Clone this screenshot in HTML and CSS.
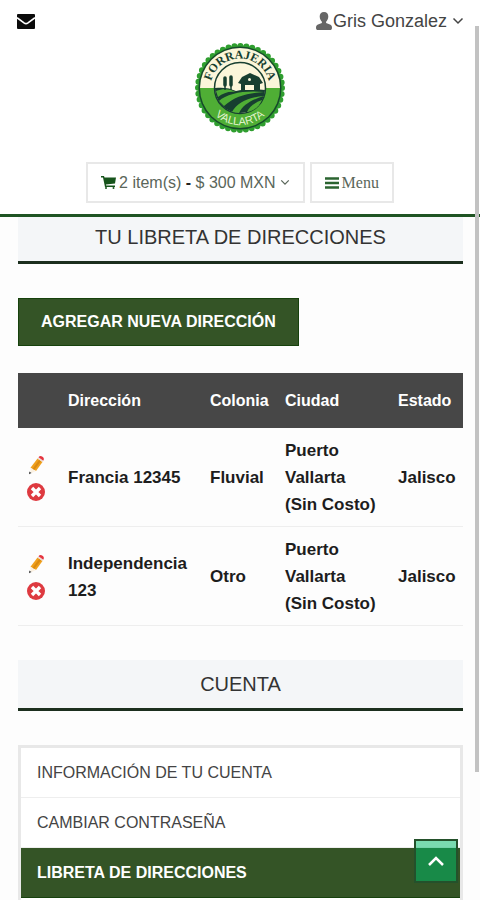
FILE: index.html
```html
<!DOCTYPE html>
<html lang="es">

<head>
    <meta charset="UTF-8">
    <meta name="viewport" content="width=device-width, initial-scale=1.0">
    <title>Forrajeria Vallarta</title>
    <link rel="stylesheet" href="styles.css">
</head>

<body>

    <!-- Shared icons -->
    <svg class="sprite" aria-hidden="true">
        <symbol id="chevron" viewBox="0 0 12 8">
            <path d="M1.5 1.5 6 6l4.500-4.500" fill="none" stroke="currentColor" stroke-width="1.500" />
        </symbol>
        <symbol id="pencil" viewBox="0 0 18 20">
            <path d="m10.500 3.500 5 3.500-6.500 9-5.500-3.200z" fill="#f0a01c" />
            <path d="m12 5 2 1.300-7 9-1.700-1.100z" fill="#d98a12" />
            <path d="m10.500 3.500.8-1 5 3.400-.8 1.100z" fill="#e8dcd8" />
            <path d="M11.500 2.200C12.500.8 14 .8 15.500 1.800c1.400 1 1.800 2.400.8 3.900z" fill="#e5353f" />
            <path d="M3.500 12.800 9 16l-5.500 2.500z" fill="#fbf1e2" />
            <path d="m2.300 16.500 2.200 1.400-2.500 1.300z" fill="#444" />
        </symbol>
        <symbol id="remove" viewBox="0 0 18 18">
            <circle cx="9" cy="9" r="9" fill="#de3a40" />
            <path d="m5 5 8 8m0-8-8 8" stroke="#fff" stroke-width="3.400" />
        </symbol>
    </svg>

    <header class="header">
        <div class="topbar">
            <a href="#" class="mail" aria-label="Contacto">
                <svg width="18" height="15" viewBox="0 0 18 15">
                    <rect width="18" height="15" rx="1" fill="#0b0b0b" />
                    <path d="m0 3.700 7 5.200q2 1.400 4 0l7-5.200" fill="none" stroke="#fff" stroke-width="1.700" />
                </svg>
            </a>
            <button type="button" class="user">
                <svg width="16" height="18" viewBox="0 0 16 18">
                    <path d="M8 0C5.200 0 3.600 1.800 3.700 4.600c.1 2.400 1 4.100 2.200 5.100v1.400L2 12.600C.6 13.200 0 14.200 0 15.700 0 17.300.7 18 2 18h12c1.300 0 2-.7 2-2.300 0-1.500-.6-2.500-2-3.100l-3.900-1.500V9.700c1.200-1 2.100-2.700 2.200-5.100C12.400 1.800 10.800 0 8 0z" fill="#666" />
                </svg>
                <span>Gris Gonzalez</span>
                <svg class="chevron" width="12" height="8"><use href="#chevron" /></svg>
            </button>
        </div>

        <a href="#" class="logo" aria-label="Forrajeria Vallarta">
            <svg width="92" height="92" viewBox="0 0 92 92">
                <circle cx="46" cy="46" r="42" fill="#2f9e2f" stroke="#2f9e2f" stroke-width="6" stroke-linecap="round" stroke-dasharray="0 6" />
                <circle cx="46" cy="46" r="41.500" fill="#174a2b" />
                <path d="M6 46a40 40 0 0 1 80 0z" fill="#fbf6da" />
                <path d="M6 46a40 40 0 0 0 80 0z" fill="#4fae35" />
                <circle cx="46" cy="46" r="25.500" fill="#fbf6da" stroke="#173f30" stroke-width="1.500" />
                <path d="M21 46c8-1 15 0 21 3 8-2 17-2 29-1-1 13-11 23-25 23S21 60 21 46z" fill="#173f30" />
                <path d="M22 49c7-3 15-2 20 1-7-1-13 1-18 5z" fill="#4fae35" />
                <path d="M25 59c8-8 27-11 45-9-16 1-29 4-40 14z" fill="#4fae35" />
                <path d="M38 70c5-9 16-15 32-16-13 4-21 9-25 17z" fill="#4fae35" />
                <path d="M53 70c2-5 7-9 15-12-2 5-6 9-11 11z" fill="#4fae35" />
                <path d="M31 35v13m6-14v14" stroke="#173f30" stroke-width="1.500" />
                <path d="M31 36v7m6-8v8" stroke="#173f30" stroke-width="3.500" stroke-linecap="round" />
                <path d="M44 41l4-6 8-4 9 4 4 6-3 1v7H47v-7z" fill="#173f30" />
                <path d="M51 43h9v5h-9z" fill="#fbf6da" />
                <circle cx="55.500" cy="37.500" r="1.500" fill="#fbf6da" />
                <path id="arcTop" d="M16.500 46a29.500 29.500 0 0 1 59 0" fill="none" />
                <path id="arcBottom" d="M9 46a37 37 0 0 0 74 0" fill="none" />
                <text class="logo-top"><textPath href="#arcTop" startOffset="50%">FORRAJERIA</textPath></text>
                <text class="logo-bottom"><textPath href="#arcBottom" startOffset="50%">VALLARTA</textPath></text>
            </svg>
        </a>

        <div class="actions">
            <button type="button" class="box">
                <svg width="15" height="13" viewBox="0 0 15 13">
                    <path d="M0 0h3l.5 1.500H15L14 7.500 5 8.500l.2 1H14V11H4L2 1.500H0z" fill="#17541c" />
                    <circle cx="5" cy="12" r="1" fill="#17541c" />
                    <circle cx="12.500" cy="12" r="1" fill="#17541c" />
                </svg>
                <span>2 item(s) <b>-</b> $ 300 MXN</span>
                <svg class="chevron" width="10" height="7"><use href="#chevron" /></svg>
            </button>
            <button type="button" class="box box-menu">
                <svg width="14" height="12" viewBox="0 0 14 12">
                    <path d="M0 1.500h14M0 6h14M0 10.500h14" stroke="#2b6430" stroke-width="2.500" />
                </svg>
                <span>Menu</span>
            </button>
        </div>
    </header>

    <main class="content">
        <h1 class="title title-first">TU LIBRETA DE DIRECCIONES</h1>

        <button type="button" class="add">AGREGAR NUEVA DIRECCIÓN</button>

        <table class="addresses">
            <thead>
                <tr>
                    <th class="col-tools"></th>
                    <th class="col-address">Dirección</th>
                    <th class="col-area">Colonia</th>
                    <th class="col-city">Ciudad</th>
                    <th class="col-state">Estado</th>
                </tr>
            </thead>
            <tbody>
                <tr>
                    <td>
                        <div class="tools">
                            <a href="#" aria-label="Editar"><svg width="18" height="20"><use href="#pencil" /></svg></a>
                            <a href="#" aria-label="Eliminar"><svg width="18" height="18"><use href="#remove" /></svg></a>
                        </div>
                    </td>
                    <td>Francia 12345</td>
                    <td>Fluvial</td>
                    <td>Puerto Vallarta (Sin&nbsp;Costo)</td>
                    <td>Jalisco</td>
                </tr>
                <tr>
                    <td>
                        <div class="tools">
                            <a href="#" aria-label="Editar"><svg width="18" height="20"><use href="#pencil" /></svg></a>
                            <a href="#" aria-label="Eliminar"><svg width="18" height="18"><use href="#remove" /></svg></a>
                        </div>
                    </td>
                    <td>Independencia 123</td>
                    <td>Otro</td>
                    <td>Puerto Vallarta (Sin&nbsp;Costo)</td>
                    <td>Jalisco</td>
                </tr>
            </tbody>
        </table>

        <h2 class="title">CUENTA</h2>

        <nav class="account">
            <a href="#">INFORMACIÓN DE TU CUENTA</a>
            <a href="#">CAMBIAR CONTRASEÑA</a>
            <a href="#" class="active">LIBRETA DE DIRECCIONES</a>
        </nav>
    </main>

    <button type="button" class="to-top" aria-label="Subir">
        <svg width="18" height="12" viewBox="0 0 18 12">
            <path d="m2 10 7-7 7 7" fill="none" stroke="#fff" stroke-width="2.500" />
        </svg>
    </button>
    <div class="scroll-thumb"></div>

</body>

</html>
```

FILE: styles.css
```css
* {
    box-sizing: border-box;
}

html {
    scrollbar-width: none;
}

body {
    margin: 0;
    background: #fdfdfd;
    color: #222;
    font-family: "Liberation Sans", Arial, sans-serif;
    font-size: 16px;
}

a {
    color: inherit;
    text-decoration: none;
}

button {
    font: inherit;
    color: inherit;
    cursor: pointer;
}

svg {
    display: block;
    flex: none;
}

.sprite {
    position: absolute;
    width: 0;
    height: 0;
}

/* Header */
.header {
    position: sticky;
    top: 0;
    z-index: 2;
    background: #fff;
    border-bottom: 3px solid #1f5423;
    padding-bottom: 11px;
}

.topbar {
    display: flex;
    justify-content: space-between;
    align-items: center;
    height: 42px;
    padding: 0 16px 0 17px;
}

.user {
    display: flex;
    align-items: center;
    gap: 1px;
    padding: 0;
    border: 0;
    background: none;
    color: #444;
    font-size: 18px;
}

.chevron {
    margin-left: 4px;
}

.logo {
    display: block;
    width: 92px;
    margin: 0 auto;
}

.logo-top,
.logo-bottom {
    text-anchor: middle;
}

.logo-top {
    fill: #173f30;
    font: bold 12px "Liberation Serif", serif;
}

.logo-bottom {
    fill: #e4f3cf;
    font: 11px "Liberation Sans", sans-serif;
}

.actions {
    display: flex;
    justify-content: center;
    gap: 5px;
    margin-top: 28px;
}

.box {
    display: flex;
    align-items: center;
    gap: 3px;
    height: 41px;
    padding: 0 13px;
    border: 2px solid #e8e8e8;
    background: #fff;
    color: #5a665a;
}

.box b {
    color: #222;
}

.box .chevron {
    margin-left: 1px;
}

.box-menu {
    font-family: "Liberation Serif", serif;
}

/* Content */
.content {
    padding: 0 17px 0 18px;
}

.title {
    margin: 34px 0;
    padding: 0 10px;
    border-bottom: 3px solid #1c2f1e;
    background: #f4f6f8;
    color: #333;
    font-size: 20px;
    font-weight: normal;
    line-height: 48px;
    text-align: center;
}

/* Tucked slightly under the sticky header */
.title-first {
    margin-top: -4px;
}

.add {
    display: block;
    height: 48px;
    padding: 0 22px;
    border: 1px solid #17420d;
    background: #345426;
    color: #fff;
    font-weight: bold;
}

.addresses {
    width: 100%;
    margin-top: 27px;
    border-collapse: collapse;
    table-layout: fixed;
    color: #1d1d1d;
    font-size: 17px;
    font-weight: bold;
    line-height: 27px;
    text-align: left;
}

.addresses th {
    height: 55px;
    padding: 0 0 0 9px;
    background: #474747;
    color: #fff;
    font-size: 16px;
}

.addresses td {
    padding: 9px 0 8px 9px;
    border-bottom: 1px solid #eee;
}

/* The address column takes the remaining width */
.col-tools {
    width: 41px;
}

.col-area {
    width: 75px;
}

.col-city {
    width: 113px;
}

.col-state {
    width: 74px;
}

.tools {
    display: flex;
    flex-direction: column;
    gap: 8px;
}

.account {
    border: 3px solid #e8e8e8;
    border-bottom: 0;
    padding-bottom: 3px;
    color: #444;
    background: #fff;
}

.account a {
    display: block;
    padding: 0 16px;
    line-height: 49px;
    border-bottom: 1px solid #eee;
}

.account .active {
    border-color: #17420d;
    background: #345426;
    color: #fff;
    font-weight: bold;
}

.to-top {
    position: fixed;
    right: 22px;
    bottom: 17px;
    z-index: 3;
    display: flex;
    justify-content: center;
    align-items: center;
    width: 44px;
    height: 44px;
    padding: 0;
    border: 2px solid #24512b;
    background: rgba(0, 187, 104, 0.52);
    background-clip: padding-box;
}

.scroll-thumb {
    position: fixed;
    top: 26px;
    right: 1px;
    bottom: 128px;
    z-index: 4;
    width: 4px;
    background: #c2c2c2;
}
```
